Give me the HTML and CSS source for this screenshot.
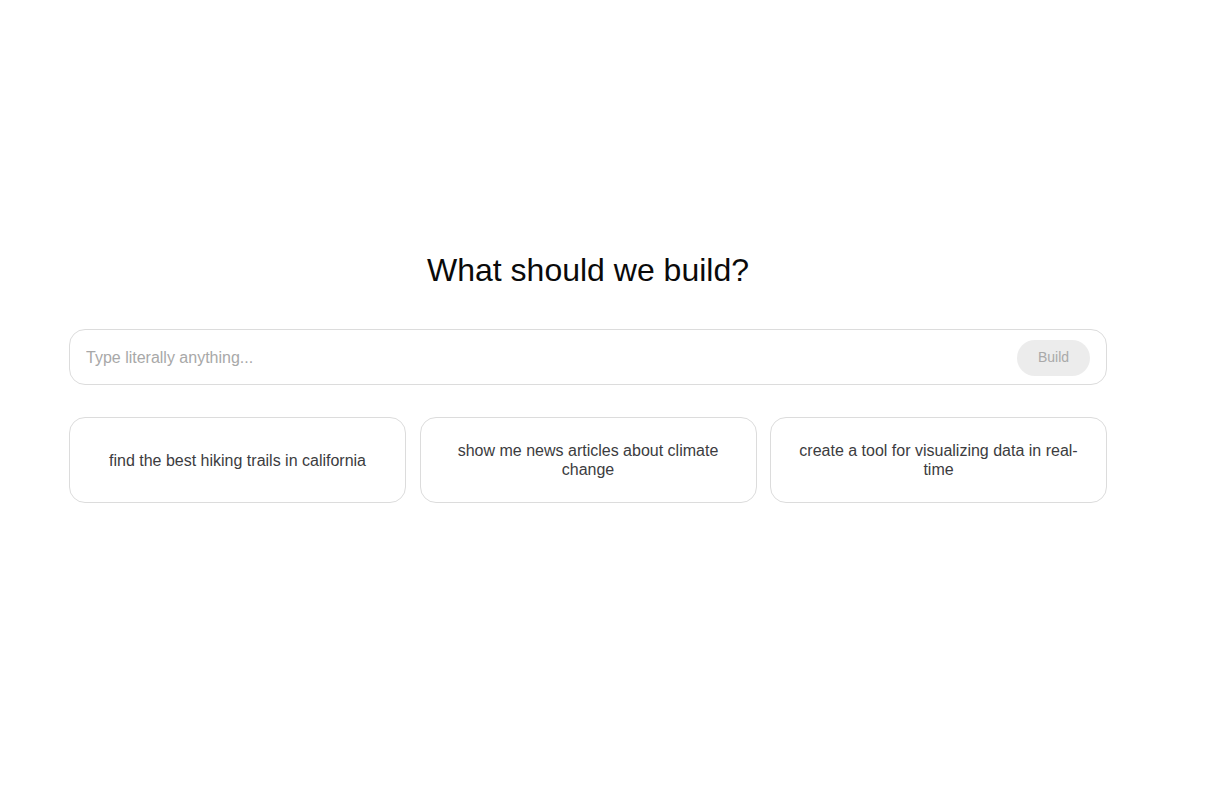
FILE: index.html
```html
<!DOCTYPE html>
<html lang="en">
<head>
<meta charset="utf-8">
<title>What should we build?</title>
<link rel="stylesheet" href="styles.css">
</head>
<body>
<main class="page">
  <h1 class="title">What should we build?</h1>
  <form class="prompt">
    <input class="prompt-input" type="text" placeholder="Type literally anything...">
    <button class="build-btn" type="button">Build</button>
  </form>
  <div class="suggestions">
    <button class="card" type="button">find the best hiking trails in california</button>
    <button class="card" type="button">show me news articles about climate change</button>
    <button class="card" type="button">create a tool for visualizing data in real-time</button>
  </div>
</main>
</body>
</html>
```
FILE: styles.css
```css
html, body {
  margin: 0;
  padding: 0;
  background: #ffffff;
}
body {
  font-family: "Liberation Sans", Arial, sans-serif;
  color: #111;
}
.page {
  width: 1038px;
  margin: 0 0 0 69px;
  padding-top: 252px;
  display: flex;
  flex-direction: column;
}
.title {
  margin: 0;
  font-size: 32px;
  font-weight: 400;
  line-height: 37px;
  text-align: center;
  color: #0a0a0a;
}
.prompt {
  margin: 40px 0 0 0;
  height: 56px;
  box-sizing: border-box;
  border: 1px solid #dcdcdc;
  border-radius: 16px;
  display: flex;
  align-items: center;
  padding: 0 16px;
  gap: 12px;
}
.prompt-input {
  flex: 1;
  border: none;
  outline: none;
  font-family: inherit;
  font-size: 16px;
  color: #222;
  padding: 0;
  margin-top: 1px;
  background: transparent;
}
.prompt-input::placeholder {
  color: #a8a8a8;
}
.build-btn {
  width: 73px;
  height: 36px;
  border: none;
  border-radius: 18px;
  background: #ececec;
  color: #a9a9a9;
  font-family: inherit;
  font-size: 14px;
  padding: 0 0 3px 0;
  margin-top: 2px;
}
.suggestions {
  margin-top: 32px;
  display: grid;
  grid-template-columns: repeat(3, 1fr);
  gap: 13.5px;
}
.card {
  height: 86px;
  box-sizing: border-box;
  border: 1px solid #dcdcdc;
  border-radius: 16px;
  background: #fff;
  padding: 0 24px;
  font-family: inherit;
  font-size: 16px;
  line-height: 19px;
  color: #3c3c40;
  text-align: center;
  display: flex;
  align-items: center;
  justify-content: center;
}
```
